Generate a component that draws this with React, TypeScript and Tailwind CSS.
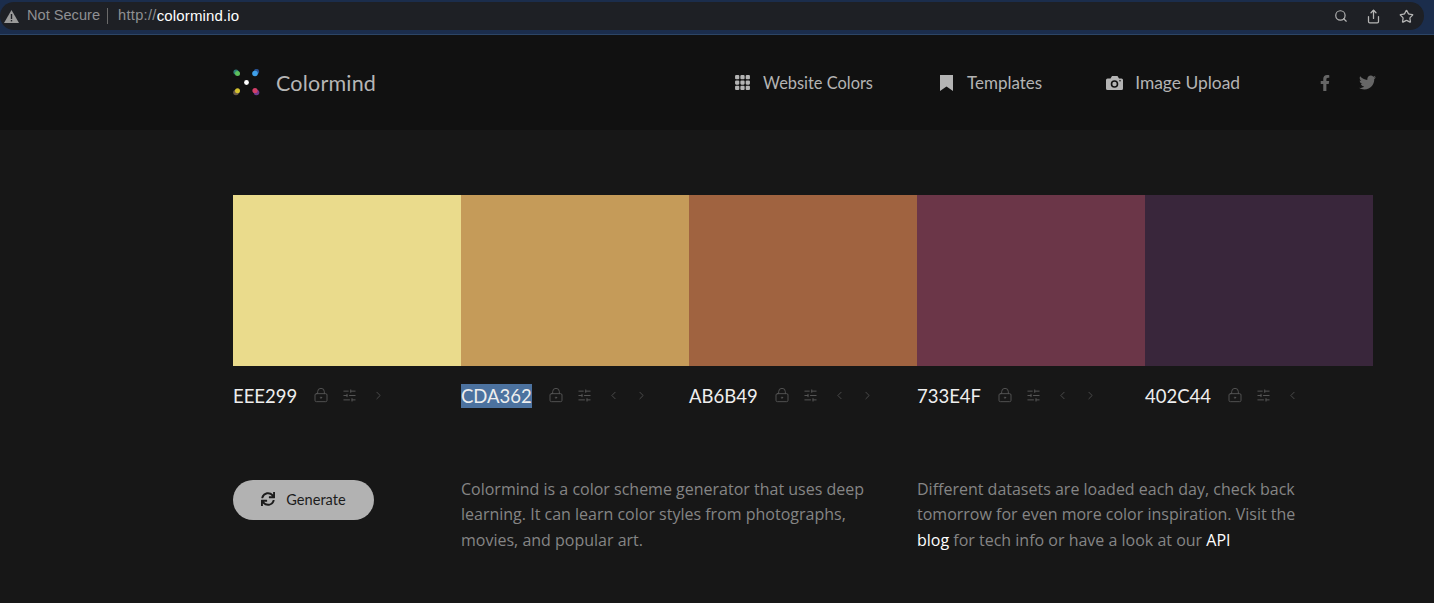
import { ChevronLeft, ChevronRight, LockKeyhole, Search, SlidersHorizontal, Star, Share } from 'lucide-react';
import { FaFacebookF, FaTwitter, FaSync } from 'react-icons/fa';
import { BsGrid3X3GapFill } from 'react-icons/bs';

const swatches = [
  { hex: 'EEE299', bg: 'bg-[#eadb8c]', left: false, right: true },
  { hex: 'CDA362', bg: 'bg-[#c59b59]', left: true, right: true, selected: true },
  { hex: 'AB6B49', bg: 'bg-[#a06340]', left: true, right: true },
  { hex: '733E4F', bg: 'bg-[#6b3648]', left: true, right: true },
  { hex: '402C44', bg: 'bg-[#39263b]', left: true, right: false },
];

function Logo() {
  return (
    <svg width="28" height="28" viewBox="0 0 28 28" className="mr-[15px]">
      <circle cx="3" cy="3" r="2.6" fill="#2f7f78" />
      <circle cx="4.5" cy="4.5" r="2.5" fill="#5cc05c" />
      <circle cx="23.5" cy="2.5" r="2.6" fill="#27508f" />
      <circle cx="22" cy="4.5" r="2.8" fill="#3fa0e8" />
      <circle cx="13.5" cy="13.5" r="2.4" fill="#ffffff" />
      <circle cx="3" cy="23.5" r="2.8" fill="#6b5a48" />
      <circle cx="4.5" cy="21.7" r="2.5" fill="#d4c22f" />
      <circle cx="23.5" cy="23.5" r="2.8" fill="#6f3a8c" />
      <circle cx="22" cy="21.5" r="2.6" fill="#d23f68" />
    </svg>
  );
}

function BookmarkIcon() {
  return (
    <svg width="13" height="16" viewBox="0 0 13 16" className="mr-[14px]">
      <path d="M0 0H13V16L6.5 11.5L0 16Z" fill="#b4b4b4" />
    </svg>
  );
}

function CameraIcon() {
  return (
    <svg width="17" height="14" viewBox="0 0 17 14" className="mr-[12px]">
      <path d="M1.5 2.5H4.5L6 0H11.5L13 2.5H15.5A1.5 1.5 0 0 1 17 4V12.5A1.5 1.5 0 0 1 15.5 14H1.5A1.5 1.5 0 0 1 0 12.5V4A1.5 1.5 0 0 1 1.5 2.5Z" fill="#b4b4b4" />
      <circle cx="8.5" cy="8" r="3" fill="#b4b4b4" stroke="#111111" strokeWidth="1.6" />
      <circle cx="14" cy="4.8" r="0.8" fill="#111111" />
    </svg>
  );
}

function WarningIcon() {
  return (
    <svg width="15" height="13" viewBox="0 0 15 13" className="mr-[8px]">
      <path d="M7.5 0L15 13H0Z" fill="#9a9a9a" />
      <rect x="6.8" y="4" width="1.4" height="5" fill="#1e2025" />
      <rect x="6.8" y="10" width="1.4" height="1.4" fill="#1e2025" />
    </svg>
  );
}

function NavItem({ icon, label, className }: { icon: React.ReactNode; label: string; className: string }) {
  return (
    <a className={`flex items-center text-[#b4b4b4] ${className}`}>
      {icon}
      {label}
    </a>
  );
}

function SwatchControls({ hex, left, right, selected }: { hex: string; left: boolean; right: boolean; selected?: boolean }) {
  return (
    <div className="flex h-[24px] w-[228px] items-center text-[#555555]">
      <span className={`mr-[16px] text-[18.5px] leading-[24px] text-[#eeeeee] ${selected ? 'bg-[#4c729f]' : ''}`}>{hex}</span>
      <LockKeyhole size={16} strokeWidth={1.4} className="mb-[2px] mr-[13px]" />
      <SlidersHorizontal size={15} strokeWidth={1.6} className="mb-[2px] mr-[15px]" />
      {left && <ChevronLeft size={13} strokeWidth={1.5} className="mb-[2px] mr-[15px]" />}
      {right && <ChevronRight size={13} strokeWidth={1.5} className="mb-[2px]" />}
    </div>
  );
}

export default function App() {
  return (
    <div className="h-[603px] w-full overflow-hidden bg-[#171717] font-['Lato',sans-serif]">
      <div className="h-[35px] border-b border-[#2c4566] bg-[#1b2d4c] pt-[2px] pr-[10px] font-['Liberation_Sans',sans-serif]">
        <div className="flex h-[28px] items-center rounded-full bg-[#1e2025] pl-[4px] pr-[10px] text-[14.6px]">
          <WarningIcon />
          <span className="text-[#8f9093]">Not Secure</span>
          <span className="ml-[7px] mr-[10px] h-[16px] w-px bg-[#6a6a6a]" />
          <span className="tracking-[0.3px] text-[#8f9093]">http://</span>
          <span className="text-[15px] font-medium tracking-[0.15px] text-white">colormind.io</span>
          <div className="ml-auto flex items-center gap-[18px] text-[#b5b5b5]">
            <Search size={14} />
            <Share size={15} />
            <Star size={15} strokeWidth={2} />
          </div>
        </div>
      </div>

      <header className="flex h-[95px] items-center bg-[#111111] pl-[233px] pt-[1px]">
        <Logo />
        <span className="text-[21.5px] tracking-[0.2px] text-[#b6b6b6]">Colormind</span>
        <nav className="ml-[358px] flex items-center">
          <NavItem className="mr-[67px] text-[16.4px]" label="Website Colors" icon={<BsGrid3X3GapFill size={17} className="mr-[12px] text-[#b4b4b4]" />} />
          <NavItem className="mr-[64px] text-[17px]" label="Templates" icon={<BookmarkIcon />} />
          <NavItem className="mr-[77px] text-[17.4px]" label="Image Upload" icon={<CameraIcon />} />
          <FaFacebookF size={16} className="mr-[26px] text-[#666666]" />
          <FaTwitter size={17} className="text-[#666666]" />
        </nav>
      </header>

      <main className="ml-[233px] w-[1140px] pt-[65px]">
        <div className="flex">
          {swatches.map(s => <div key={s.hex} className={`h-[171px] w-[228px] ${s.bg}`} />)}
        </div>
        <div className="mt-[18px] flex">
          {swatches.map(s => <SwatchControls key={s.hex} {...s} />)}
        </div>

        <div className="mt-[68.9px] flex font-['Open_Sans',sans-serif] text-[16px] leading-[25.5px] text-[#858585]">
          <div className="w-[228px] pt-[3.1px]">
            <button className="flex h-[40px] w-[141px] items-center justify-center rounded-full bg-[#b2b2b2] pb-[1px] font-['Lato',sans-serif] text-[14.6px] text-[#1c1c1c]">
              <FaSync size={14} className="mr-[11px]" />
              Generate
            </button>
          </div>
          <p className="w-[456px] pr-[50px]">
            Colormind is a color scheme generator that uses deep learning. It can learn color styles from photographs, movies, and popular art.
          </p>
          <p className="w-[400px]">
            Different datasets are loaded each day, check back tomorrow for even more color inspiration. Visit the <a className="font-medium text-white">blog</a> for tech info or have a look at our <a className="font-medium text-white">API</a>
          </p>
        </div>
      </main>
    </div>
  );
}
